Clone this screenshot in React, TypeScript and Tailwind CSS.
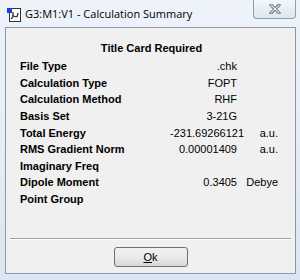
import React from 'react';

const ROWS: { label: string; value: string; unit?: string }[] = [
  { label: 'File Type', value: '.chk' },
  { label: 'Calculation Type', value: 'FOPT' },
  { label: 'Calculation Method', value: 'RHF' },
  { label: 'Basis Set', value: '3-21G' },
  { label: 'Total Energy', value: '-231.69266121', unit: 'a.u.' },
  { label: 'RMS Gradient Norm', value: '0.00001409', unit: 'a.u.' },
  { label: 'Imaginary Freq', value: '' },
  { label: 'Dipole Moment', value: '0.3405', unit: 'Debye' },
  { label: 'Point Group', value: '' },
];

const AppIcon = () => (
  <svg width="16" height="16" viewBox="0 0 16 16">
    <rect x="3.5" y="1.5" width="11" height="13" fill="#fff" stroke="#333" />
    <rect x="1" y="1" width="5" height="5" fill="#1a3fd8" />
    <line x1="7" y1="5" x2="7" y2="9" stroke="#222" strokeWidth="1.2" />
    <line x1="7" y1="9" x2="5.5" y2="12" stroke="#222" strokeWidth="1.2" />
    <line x1="7" y1="9" x2="11" y2="10" stroke="#222" strokeWidth="1.2" />
    <line x1="11" y1="10" x2="12" y2="6" stroke="#222" strokeWidth="1.2" />
    <circle cx="7" cy="9" r="1.2" fill="#555" />
  </svg>
);

export default function App() {
  return (
    <div
      className="relative w-[300px] h-[280px] overflow-hidden bg-gradient-to-b from-[#eef3fa] via-[#e4edf7] to-[#dbe6f3]"
      style={{ fontFamily: '"Liberation Sans", Arial, sans-serif' }}
    >
      {/* title bar */}
      <div className="flex items-start h-[27px] pl-[6px]">
        <div className="mt-[7px]">
          <AppIcon />
        </div>
        <div
          className="ml-[3px] mt-[6px] text-[11px] text-black leading-[16px]"
          style={{ fontFamily: '"Open Sans", "Noto Sans", sans-serif' }}
        >
          G3:M1:V1 - Calculation Summary
        </div>
        <div className="absolute right-[4px] top-0 w-[43px] h-[19px] rounded-b-[4px] border border-t-0 border-[#8e9fb3] bg-gradient-to-b from-[#f4f7fb] to-[#dde6f1] flex items-center justify-center">
          <svg width="12" height="10" viewBox="0 0 12 10">
            <path d="M2 1 L10 9 M10 1 L2 9" stroke="#5a6470" strokeWidth="3" strokeLinecap="square" />
            <path d="M2 1 L10 9 M10 1 L2 9" stroke="#e9eef4" strokeWidth="1.2" strokeLinecap="square" />
          </svg>
        </div>
      </div>

      {/* client area */}
      <div className="mx-[5px] mr-[4px] h-[247px] border border-[#8d99a6] bg-[#f0f0f0] flex flex-col text-[11px] text-black">
        <div className="pt-[12px] text-center font-bold leading-[16px] pl-[2px]">Title Card Required</div>
        <div className="mt-[2px] flex flex-col">
          {ROWS.map(r => (
            <div key={r.label} className="flex items-center h-[16.6px] leading-[16px]">
              <div className="w-[14px]" />
              <div className="font-bold w-[150px]">{r.label}</div>
              <div className="w-[67px] text-right">{r.value}</div>
              <div className="w-[41px] text-right">{r.unit}</div>
            </div>
          ))}
        </div>
        <div className="mt-auto mx-[4px] border-t border-[#a0a0a0] border-b border-b-white" />
        <div className="flex justify-center pt-[7px] pb-[6px]">
          <button className="w-[74px] h-[20px] rounded-[3px] border border-[#707070] bg-gradient-to-b from-[#f2f2f2] via-[#ebebeb] to-[#d6d6d6] text-[11px] leading-[16px]">
            <span className="underline">O</span>k
          </button>
        </div>
      </div>
    </div>
  );
}
